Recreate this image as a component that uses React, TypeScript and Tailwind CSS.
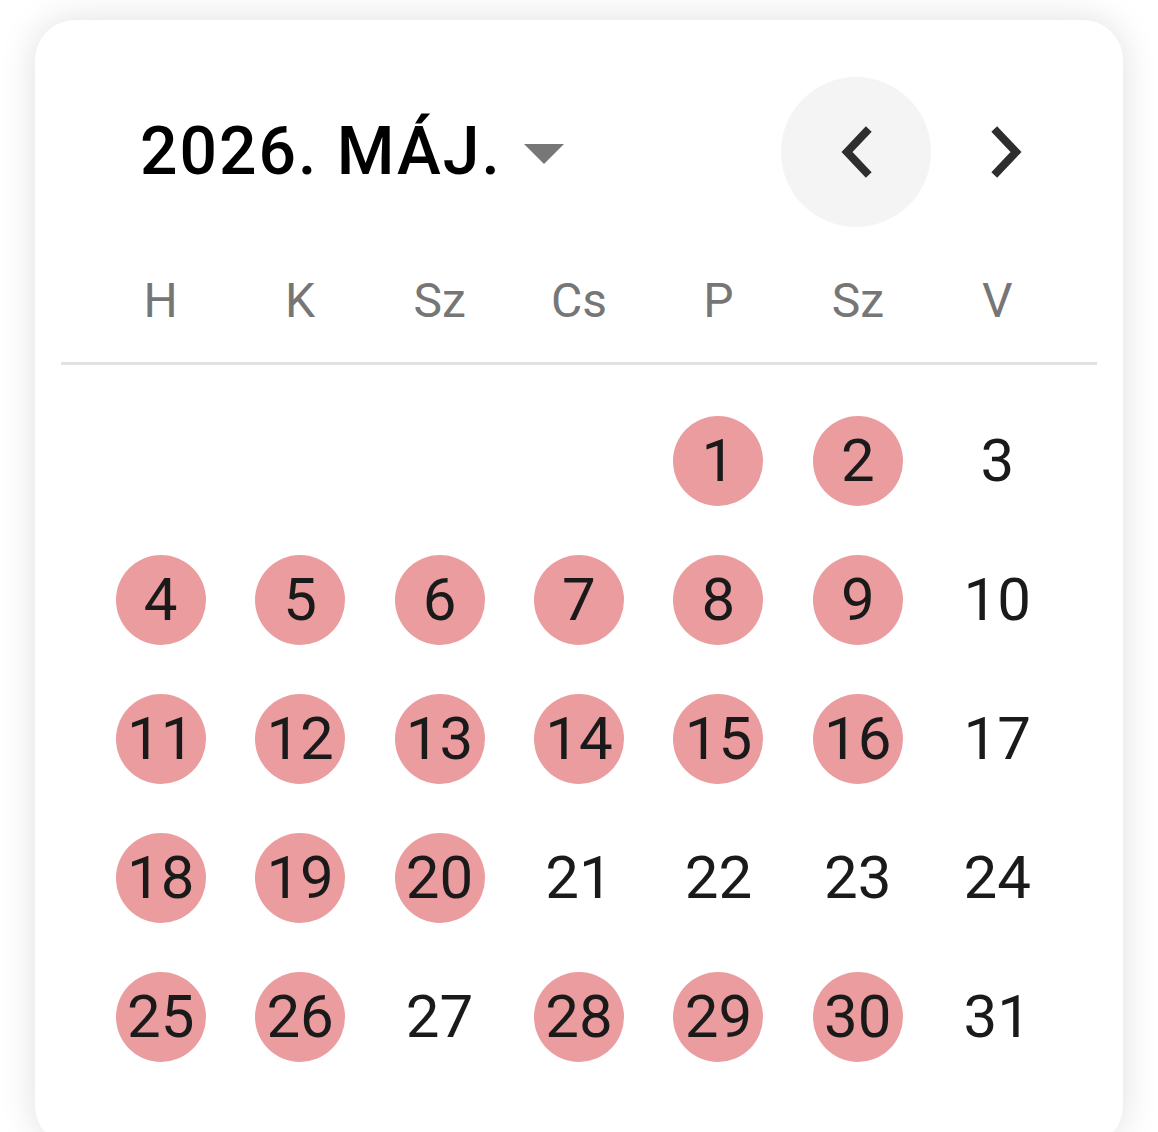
import React from "react";

const weekdays = ["H", "K", "Sz", "Cs", "P", "Sz", "V"];
const marked = new Set([1, 2, 4, 5, 6, 7, 8, 9, 11, 12, 13, 14, 15, 16, 18, 19, 20, 25, 26, 28, 29, 30]);

const cells: (number | null)[] = [
  null, null, null, null,
  ...Array.from({ length: 31 }, (_, i) => i + 1),
];

const Chevron = ({ dir }: { dir: "left" | "right" }) => (
  <svg width="40" height="56" viewBox="0 0 40 56" fill="none">
    <path
      d={dir === "left" ? "M30 8 L11 28 L30 48" : "M10 8 L29 28 L10 48"}
      stroke="#2e2e2e"
      strokeWidth="8"
      strokeLinecap="square"
      strokeLinejoin="miter"
    />
  </svg>
);

export default function App() {
  return (
    <div className="h-[1132px] w-full overflow-hidden bg-white px-[35px] pt-[20px]" style={{ fontFamily: "Roboto, 'Noto Sans', sans-serif" }}>
      <div className="h-[1126px] w-full rounded-[40px] bg-white px-[26px] pt-[57px] shadow-[0_0_36px_rgba(0,0,0,0.13)]">
        {/* header */}
        <div className="flex h-[150px] items-center">
          <div className="flex items-center pl-[79px]">
            <span className="text-[66px] font-medium leading-none tracking-[2px] text-black">2026. MÁJ.</span>
            <svg className="ml-[22px] mt-[4px]" width="40" height="20" viewBox="0 0 40 20">
              <path d="M0 0 H40 L20 20 Z" fill="#777777" />
            </svg>
          </div>
          <div className="ml-auto mr-[15px] flex items-center gap-[1px]">
            <button className="flex h-[150px] w-[150px] items-center justify-center rounded-full bg-[#f4f4f4]">
              <Chevron dir="left" />
            </button>
            <button className="flex h-[150px] w-[150px] items-center justify-center rounded-full">
              <Chevron dir="right" />
            </button>
          </div>
        </div>

        {/* weekdays */}
        <div className="mt-[24px] grid h-[100px] grid-cols-7 px-[30px]">
          {weekdays.map((d, i) => (
            <div key={i} className="flex items-center justify-center text-[48px] leading-none text-[#767676]">
              {d}
            </div>
          ))}
        </div>
        <div className="mt-[11px] h-[3px] bg-[#e2e2e2]" />

        {/* days */}
        <div className="mt-[26px] grid grid-cols-7 px-[30px]">
          {cells.map((n, i) => (
            <div key={i} className="flex h-[139px] items-center justify-center">
              {n !== null && (
                <div
                  className={
                    "flex h-[90px] w-[90px] items-center justify-center rounded-full text-[60px] leading-none text-[#1a1a1a] " +
                    (marked.has(n) ? "bg-[#ea9c9e]" : "")
                  }
                >
                  {n}
                </div>
              )}
            </div>
          ))}
        </div>
      </div>
    </div>
  );
}
